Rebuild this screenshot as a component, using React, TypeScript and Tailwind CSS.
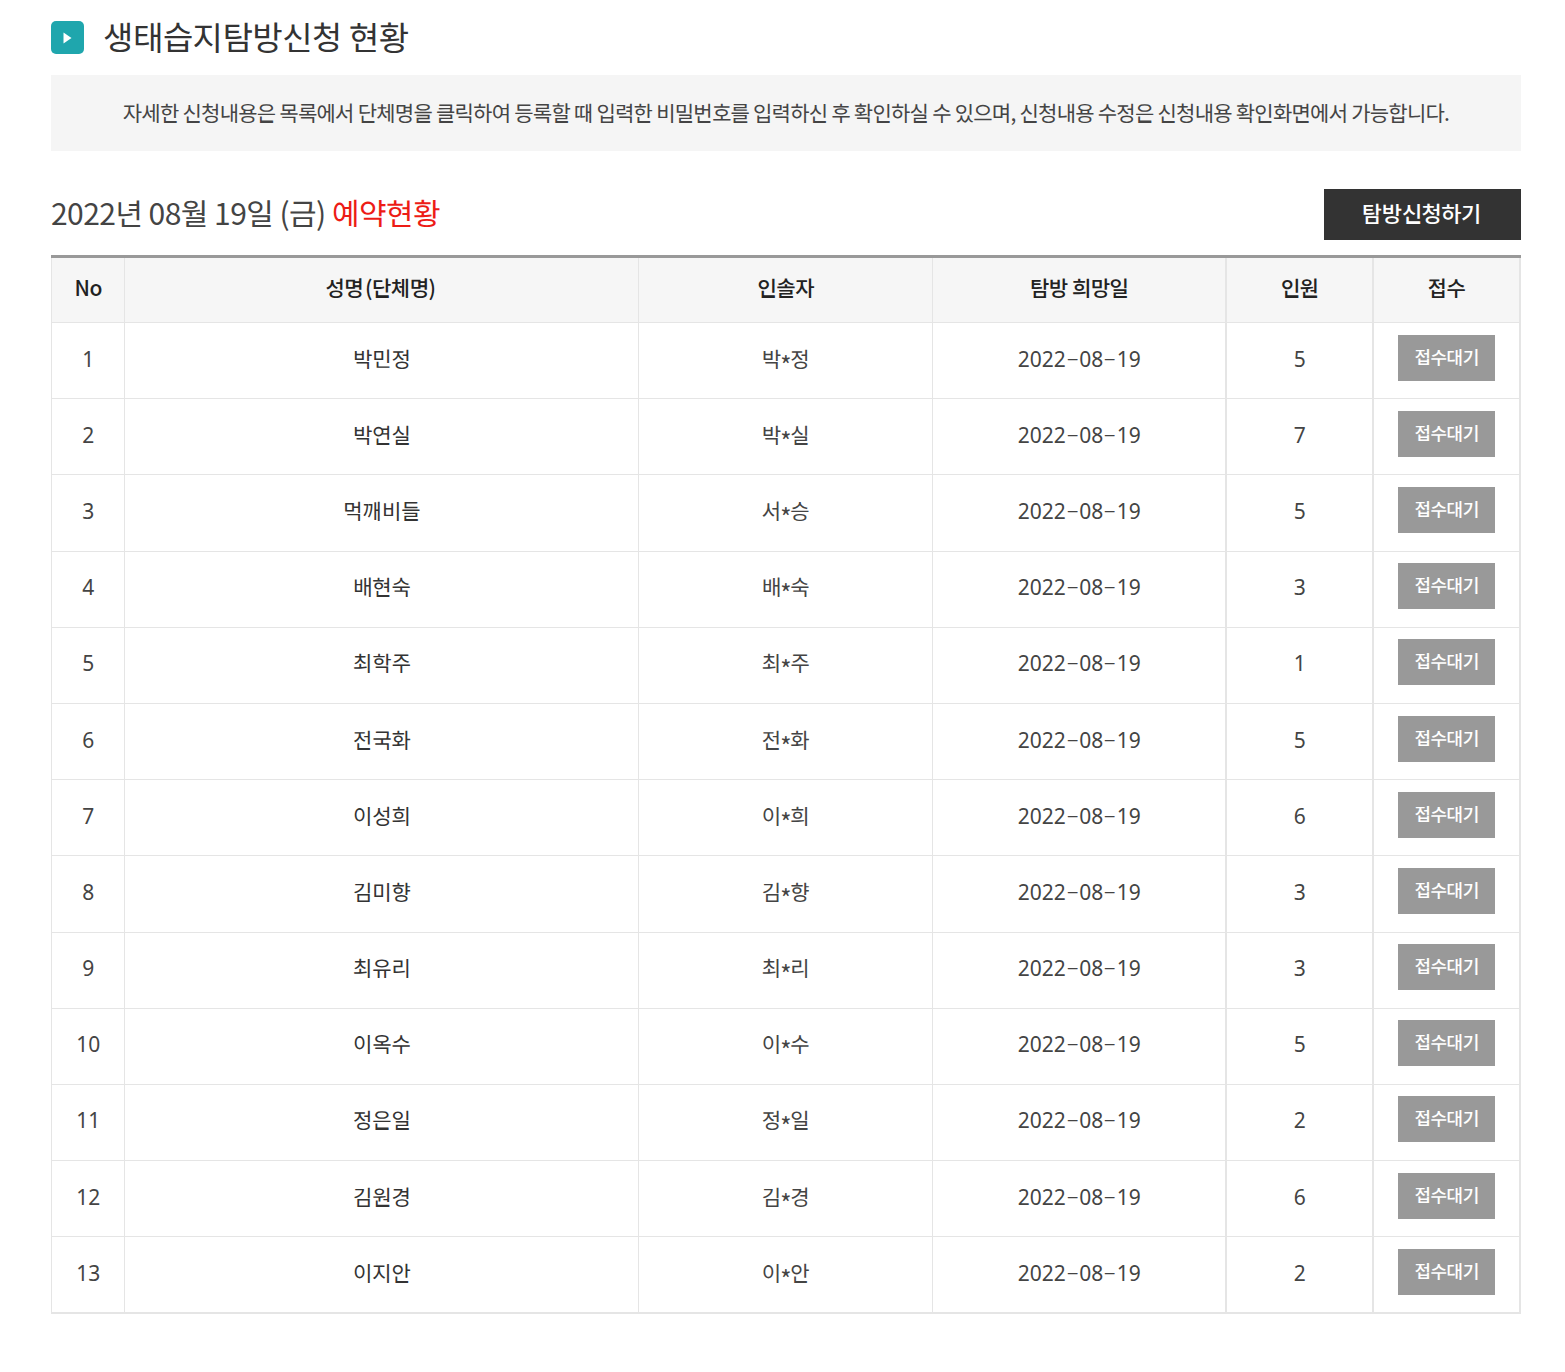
const rows: [string, string, string, number][] = [
  ["박민정", "박", "정", 5],
  ["박연실", "박", "실", 7],
  ["먹깨비들", "서", "승", 5],
  ["배현숙", "배", "숙", 3],
  ["최학주", "최", "주", 1],
  ["전국화", "전", "화", 5],
  ["이성희", "이", "희", 6],
  ["김미향", "김", "향", 3],
  ["최유리", "최", "리", 3],
  ["이옥수", "이", "수", 5],
  ["정은일", "정", "일", 2],
  ["김원경", "김", "경", 6],
  ["이지안", "이", "안", 2],
];

const font = "font-['Noto_Sans_KR','Noto_Sans_CJK_KR',sans-serif]";
const digits = "font-['Noto_Sans','Noto_Sans_CJK_KR',sans-serif] pb-[2.5px]";
const dash = "inline-block w-[13.5px] -translate-y-[1px] scale-x-[1.9] text-center font-light";
const td = "border-x border-b border-[#e5e5e5] nth-[n+4]:border-r-2 [tr:last-child_&]:border-b-2";

function DateText() {
  return (
    <>
      2022<span className={dash}>-</span>08<span className={dash}>-</span>19
    </>
  );
}

export default function App() {
  return (
    <div className={`${font} bg-white pl-[51px] pr-[44px] pt-[21px] pb-[58px] text-[#333]`}>
      <div className="flex h-[33px] items-center gap-[19px]">
        <div className="flex h-[33px] w-[33px] items-center justify-center rounded-[5px] bg-[#1fa6ad]">
          <svg width="9" height="12" viewBox="0 0 9 12">
            <path d="M0.5 0.5 L8.5 6 L0.5 11.5 Z" fill="#fff" />
          </svg>
        </div>
        <h2 className="pb-[2px] text-[33px] leading-[33px] font-normal tracking-[-0.5px] text-[#333]">생태습지탐방신청 현황</h2>
      </div>
      <p className="mt-[21px] flex h-[76px] items-center justify-center bg-[#f5f5f5] text-[21px] tracking-[-0.74px] text-[#444]">
        자세한 신청내용은 목록에서 단체명을 클릭하여 등록할 때 입력한 비밀번호를 입력하신 후 확인하실 수 있으며, 신청내용 수정은 신청내용 확인화면에서 가능합니다.
      </p>
      <div className="mt-[38px] flex h-[51px] items-center justify-between">
        <h3 className="pb-[4px] text-[30px] font-normal tracking-[-0.55px] text-[#444]">
          2022년 08월 19일 (금) <span className="text-[#ed1c16]">예약현황</span>
        </h3>
        <a className="flex h-[51px] w-[197px] items-center justify-center pb-[4px] pr-[2px] text-[22px] tracking-[-0.4px] font-medium text-white bg-[#333]">탐방신청하기</a>
      </div>
      <table className="mt-[15px] w-full table-fixed border-collapse border-t-[3px] border-t-[#999] text-center text-[21px]">
        <colgroup>
          <col className="w-[5%]" />
          <col className="w-[35%]" />
          <col className="w-[20%]" />
          <col className="w-[20%]" />
          <col className="w-[10%]" />
          <col className="w-[10%]" />
        </colgroup>
        <thead>
          <tr className="h-[66px] bg-[#f6f6f6] text-[21px]">
            {["No", "성명|(단체명)", "인솔자", "탐방 희망일", "인원", "접수"].map((h) => {
              const [a, b] = h.split("|");
              return (
                <th key={h} className="border-x border-b border-t-0 border-[#e5e5e5] pb-[5px] font-medium tracking-[-0.5px] text-[#222] nth-[n+4]:border-r-2">
                  {a}
                  {b && <span className="ml-[2px] mr-[3px]">{b}</span>}
                </th>
              );
            })}
          </tr>
        </thead>
        <tbody>
          {rows.map(([name, first, last, n], i) => (
            <tr key={i} className="h-[76.2px] text-[#444]">
              <td className={`${td} ${digits}`}>{i + 1}</td>
              <td className={`${td} pb-[4.5px] text-[#333]`}>{name}</td>
              <td className={`${td} pb-[4.5px]`}>
                {first}
                <span className="-mx-px align-[-8px] text-[24px] leading-[0]">*</span>
                {last}
              </td>
              <td className={`${td} ${digits}`}>
                <DateText />
              </td>
              <td className={`${td} ${digits}`}>{n}</td>
              <td className={`${td} pb-[6px]`}>
                <span className={`${font} mx-auto flex h-[46px] w-[97px] items-center justify-center bg-[#999] pb-[3px] text-[18px] font-medium tracking-[-0.5px] text-white`}>접수대기</span>
              </td>
            </tr>
          ))}
        </tbody>
      </table>
    </div>
  );
}
